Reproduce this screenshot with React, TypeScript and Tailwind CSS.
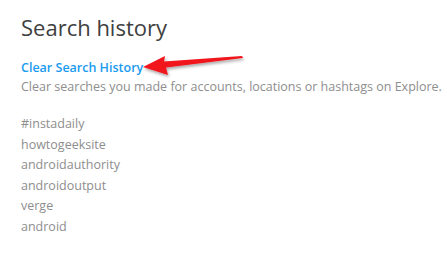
import React from 'react';

const recent = ['#instadaily', 'howtogeeksite', 'androidauthority', 'androidoutput', 'verge', 'android'];

function Arrow() {
  return (
    <svg className="absolute left-[138px] top-[49px]" width="112" height="32" viewBox="0 0 112 32">
      <defs>
        <filter id="sh" x="-20%" y="-50%" width="140%" height="200%">
          <feDropShadow dx="1" dy="2" stdDeviation="1.5" floodColor="#000" floodOpacity="0.35" />
        </filter>
      </defs>
      <path
        d="M5 18 L27 7 L26 12.5 L104 7 L105 9 L28 18.5 L30 26 Z"
        fill="#f0141e"
        filter="url(#sh)"
      />
    </svg>
  );
}

export default function App() {
  return (
    <div className="relative w-[447px] h-[265px] bg-white overflow-hidden font-['Open_Sans',sans-serif]">
      <div className="pl-[21px] pt-[12px]">
        <h1 className="text-[22px] leading-[30px] text-[#404040] font-normal">Search history</h1>
        <div className="mt-[12px]">
          <button className="text-[12.5px] leading-[18px] font-semibold text-[#1a9bf0]">Clear Search History</button>
          <p className="text-[12.5px] leading-[17px] text-[#8e8e8e] whitespace-nowrap">
            Clear searches you made for accounts, locations or hashtags on Explore.
          </p>
        </div>
        <ul className="mt-[19px] flex flex-col">
          {recent.map((r) => (
            <li key={r} className="text-[12.5px] leading-[20.6px] text-[#8e8e8e]">
              {r}
            </li>
          ))}
        </ul>
      </div>
      <Arrow />
    </div>
  );
}
